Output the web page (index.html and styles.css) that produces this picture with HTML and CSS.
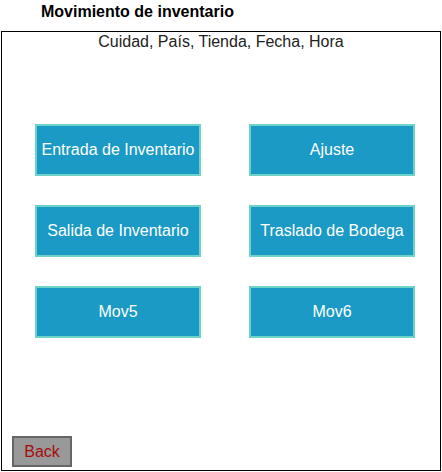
FILE: index.html
```html
<!DOCTYPE html>
<html lang="es">
<head>
<meta charset="utf-8">
<title>Movimiento de inventario</title>
<link rel="stylesheet" href="styles.css">
</head>
<body>
<div class="title">Movimiento de inventario</div>
<div class="frame">
  <div class="subtitle">Cuidad, País, Tienda, Fecha, Hora</div>
  <div class="grid">
    <button class="mov">Entrada de Inventario</button>
    <button class="mov">Ajuste</button>
    <button class="mov">Salida de Inventario</button>
    <button class="mov">Traslado de Bodega</button>
    <button class="mov">Mov5</button>
    <button class="mov">Mov6</button>
  </div>
  <div class="footer">
    <button class="back">Back</button>
  </div>
</div>
</body>
</html>
```
FILE: styles.css
```css
* { box-sizing: border-box; }
body {
  margin: 0;
  font-family: "Liberation Sans", Arial, sans-serif;
  background: #fff;
  color: #000;
}
.title {
  height: 31px;
  padding: 3px 0 0 41px;
  font-size: 16px;
  font-weight: bold;
  line-height: 18px;
}
.frame {
  margin-left: 1px;
  width: 440px;
  height: 440px;
  border: 1px solid #000;
  display: flex;
  flex-direction: column;
}
.subtitle {
  text-align: center;
  font-size: 16px;
  line-height: 19px;
  color: #222;
}
.grid {
  margin-top: 73px;
  padding-left: 33px;
  display: grid;
  grid-template-columns: 166px 166px;
  column-gap: 48px;
  row-gap: 29px;
}
.mov {
  height: 52px;
  margin: 0;
  padding: 0;
  background: #1b9ac5;
  border: 2px solid #6fd2c8;
  color: #fff;
  font-family: "Liberation Sans", Arial, sans-serif;
  font-size: 16px;
}
.footer {
  margin-top: auto;
  padding: 0 0 3px 10px;
}
.back {
  width: 60px;
  height: 31px;
  margin: 0;
  padding: 0;
  background: #999;
  border: 2px solid #666;
  color: #a50d0d;
  font-family: "Liberation Sans", Arial, sans-serif;
  font-size: 16px;
}
```
